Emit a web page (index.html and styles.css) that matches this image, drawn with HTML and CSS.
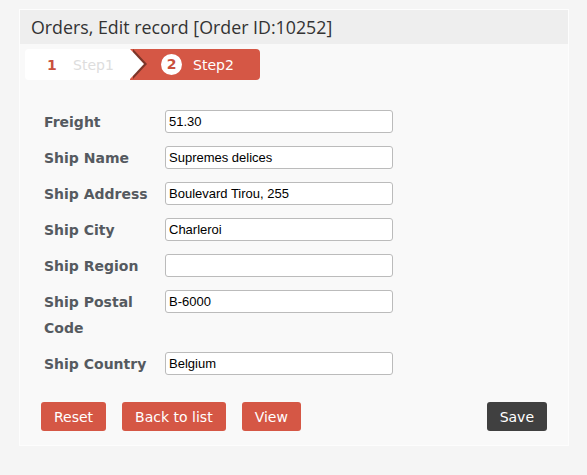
FILE: index.html
```html
<!DOCTYPE html>
<html lang="en">
<head>
    <meta charset="UTF-8">
    <meta name="viewport" content="width=device-width, initial-scale=1.0">
    <title>Orders, Edit record</title>
    <link rel="stylesheet" href="styles.css">
</head>
<body>
    <div class="panel">
        <div class="panel-title">Orders, Edit record [Order ID:10252]</div>

        <div class="steps">
            <div class="step step-done">
                <span class="step-num">1</span>
                <span class="step-label">Step1</span>
            </div>
            <div class="step step-active">
                <span class="step-num">2</span>
                <span class="step-label">Step2</span>
            </div>
        </div>

        <form class="edit-form" onsubmit="return false">
            <table class="fields">
                <tr>
                    <td class="label">Freight</td>
                    <td><input type="text" value="51.30"></td>
                </tr>
                <tr>
                    <td class="label">Ship Name</td>
                    <td><input type="text" value="Supremes delices"></td>
                </tr>
                <tr>
                    <td class="label">Ship Address</td>
                    <td><input type="text" value="Boulevard Tirou, 255"></td>
                </tr>
                <tr>
                    <td class="label">Ship City</td>
                    <td><input type="text" value="Charleroi"></td>
                </tr>
                <tr>
                    <td class="label">Ship Region</td>
                    <td><input type="text" value=""></td>
                </tr>
                <tr>
                    <td class="label">Ship Postal<br>Code</td>
                    <td><input type="text" value="B-6000"></td>
                </tr>
                <tr>
                    <td class="label">Ship Country</td>
                    <td><input type="text" value="Belgium"></td>
                </tr>
            </table>

            <div class="actions">
                <button type="reset" class="btn">Reset</button>
                <button type="button" class="btn">Back to list</button>
                <button type="button" class="btn">View</button>
                <button type="submit" class="btn btn-dark">Save</button>
            </div>
        </form>
    </div>
</body>
</html>
```

FILE: styles.css
```css
body {
    margin: 0;
    padding: 9px 17px 0 19px;
    background: #f5f5f5;
    font-family: "DejaVu Sans", Verdana, sans-serif;
}
.panel {
    width: 548px;
    background: #f9f9f9;
    border: 1px solid #fdfdfd;
    padding-bottom: 14px;
}
.panel-title {
    background: #eeeeee;
    height: 34px;
    line-height: 34px;
    padding-left: 11px;
    font-family: "Open Sans", sans-serif;
    font-size: 17.8px;
    color: #333;
}
.steps {
    display: flex;
    margin: 5px 0 0 5px;
    height: 31px;
}
.step {
    position: relative;
    display: flex;
    align-items: center;
    font-size: 14px;
}
.step-done {
    width: 83px;
    padding-left: 22px;
    background: #fff;
    border-radius: 4px 0 0 4px;
    z-index: 1;
}
.step-done .step-num {
    color: #c9503d;
    font-weight: bold;
    width: 26px;
}
.step-done .step-label {
    color: #dddddd;
}
/* chevron between steps */
.step-done::before,
.step-done::after {
    content: "";
    position: absolute;
    top: 0;
    border-top: 15.5px solid transparent;
    border-bottom: 15.5px solid transparent;
}
.step-done::before {
    right: -17px;
    border-left: 14px solid #7c3529;
}
.step-done::after {
    right: -14px;
    border-left: 14px solid #fff;
}
.step-active {
    width: 99px;
    padding-left: 31px;
    background: #d55745;
    border-radius: 0 4px 4px 0;
    color: #fff;
}
.step-active .step-num {
    width: 21px;
    height: 21px;
    border-radius: 50%;
    background: #fff;
    color: #c9503d;
    font-weight: bold;
    text-align: center;
    line-height: 21px;
    margin-right: 11px;
}
.edit-form {
    padding: 24px 20px 0 19px;
}
.fields {
    border-collapse: collapse;
}
.fields td {
    padding: 5px;
    vertical-align: top;
}
.fields .label {
    width: 111px;
    line-height: 26px;
    font-weight: bold;
    font-size: 14px;
    color: #555a60;
}
.fields input {
    width: 228px;
    height: 23px;
    margin: 1px 0 0 0;
    padding: 0 3px;
    box-sizing: border-box;
    border: 1px solid #bbb;
    border-radius: 3px;
    background: #fff;
    font-family: "Liberation Sans", Arial, sans-serif;
    font-size: 13px;
    color: #000;
}
.actions {
    display: flex;
    gap: 16px;
    margin-top: 20px;
    padding-left: 2px;
}
.btn {
    height: 29px;
    padding: 0 13px;
    border: 0;
    border-radius: 3px;
    background: #d55745;
    color: #fff;
    font-family: "DejaVu Sans", Verdana, sans-serif;
    font-size: 14px;
    cursor: pointer;
}
.btn-dark {
    margin-left: auto;
    margin-right: 1px;
    background: #404040;
}
```
